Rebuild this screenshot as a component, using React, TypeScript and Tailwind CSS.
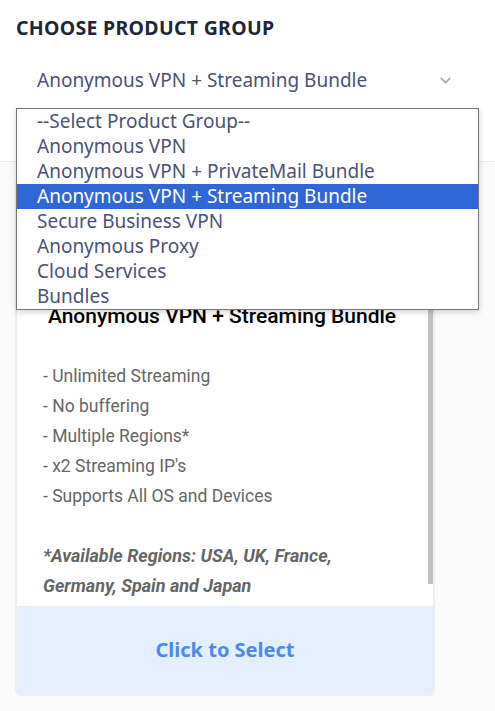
import { ChevronDown } from 'lucide-react'

const OPTIONS = [
  '--Select Product Group--',
  'Anonymous VPN',
  'Anonymous VPN + PrivateMail Bundle',
  'Anonymous VPN + Streaming Bundle',
  'Secure Business VPN',
  'Anonymous Proxy',
  'Cloud Services',
  'Bundles',
]

const FEATURES = [
  '- Unlimited Streaming',
  '- No buffering',
  '- Multiple Regions*',
  "- x2 Streaming IP's",
  '- Supports All OS and Devices',
]

const uiFont = { fontFamily: '"Noto Sans", "Open Sans", sans-serif' }
const cardFont = { fontFamily: 'Roboto, "Liberation Sans", sans-serif' }

export default function App() {
  const selected = 3

  return (
    <div className="relative w-[495px] h-[711px] overflow-hidden bg-[#fafafa]" style={uiFont}>
      {/* header + select */}
      <div className="bg-white border-b border-[#ececec] h-[162px] px-4">
        <h2 className="pt-[15px] text-[19.5px] leading-[26px] font-bold tracking-[0.3px] text-[#1e2639]">
          CHOOSE PRODUCT GROUP
        </h2>
        <div className="mt-[26px] flex items-center justify-between pl-[21px] pr-[25px]">
          <span className="text-[19px] leading-[26px] text-[#4a5377]">Anonymous VPN + Streaming Bundle</span>
          <ChevronDown className="w-[17px] h-[17px] text-[#a3a8bb]" strokeWidth={2.2} />
        </div>
      </div>

      {/* product card */}
      <div className="relative mt-4 ml-[15px] w-[420px] rounded-md border-2 border-[#eeeeee] bg-white overflow-hidden">
        <div className="pt-[122px] pl-[26px] pr-[10px]" style={cardFont}>
          <h3 className="text-center pr-[22px] text-[21px] leading-[28px] font-medium text-black">
            Anonymous VPN + Streaming Bundle
          </h3>
          <ul className="mt-[31px] text-[17.5px] leading-[30px] text-[#666666]">
            {FEATURES.map((f) => (
              <li key={f}>{f}</li>
            ))}
          </ul>
          <p className="mt-[30px] pb-[5px] text-[18px] leading-[30px] italic font-bold text-[#666666]">
            *Available Regions: USA, UK, France,
            <br />
            Germany, Spain and Japan
          </p>
        </div>
        <div className="absolute right-0 top-[110px] w-[5px] h-[294px] bg-[#c1c1c1]" />
        <div className="h-[88px] bg-[#e3effd] flex items-center justify-center">
          <span className="text-[20px] font-bold text-[#4b88f0]">Click to Select</span>
        </div>
      </div>

      {/* open dropdown list */}
      <ul className="absolute left-4 top-[108px] w-[463px] bg-white border border-[#767676] shadow-[0_2px_6px_rgba(0,0,0,0.18)]">
        {OPTIONS.map((o, i) => (
          <li
            key={o}
            className={
              i === selected
                ? 'h-[25px] pl-5 text-[19px] leading-[25px] bg-[#2f67d6] text-white'
                : 'h-[25px] pl-5 text-[19px] leading-[25px] text-[#4a5377]'
            }
          >
            {o}
          </li>
        ))}
      </ul>
    </div>
  )
}
